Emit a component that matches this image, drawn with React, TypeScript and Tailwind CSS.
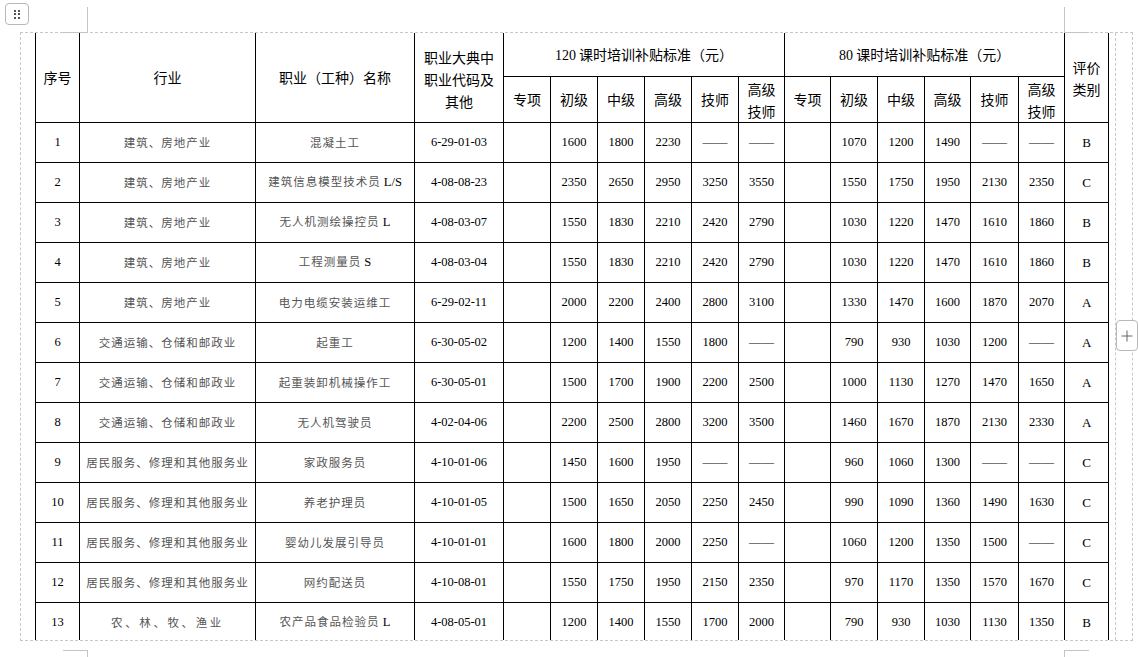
import React from "react";

const CJK = "font-['Noto_Sans_CJK_SC','Noto_Sans',sans-serif]";
const SERIF = "font-['Liberation_Serif','Noto_Sans_CJK_SC',serif]";

type Row = {
  no: string;
  ind: string;
  indWide?: boolean;
  name: string;
  suffix?: string;
  code: string;
  a: string[];
  b: string[];
  g: string;
};

const D = "——";

const rows: Row[] = [
  { no: "1", ind: "建筑、房地产业", name: "混凝土工", code: "6-29-01-03", a: ["1600", "1800", "2230", D, D], b: ["1070", "1200", "1490", D, D], g: "B" },
  { no: "2", ind: "建筑、房地产业", name: "建筑信息模型技术员", suffix: "L/S", code: "4-08-08-23", a: ["2350", "2650", "2950", "3250", "3550"], b: ["1550", "1750", "1950", "2130", "2350"], g: "C" },
  { no: "3", ind: "建筑、房地产业", name: "无人机测绘操控员", suffix: "L", code: "4-08-03-07", a: ["1550", "1830", "2210", "2420", "2790"], b: ["1030", "1220", "1470", "1610", "1860"], g: "B" },
  { no: "4", ind: "建筑、房地产业", name: "工程测量员", suffix: "S", code: "4-08-03-04", a: ["1550", "1830", "2210", "2420", "2790"], b: ["1030", "1220", "1470", "1610", "1860"], g: "B" },
  { no: "5", ind: "建筑、房地产业", name: "电力电缆安装运维工", code: "6-29-02-11", a: ["2000", "2200", "2400", "2800", "3100"], b: ["1330", "1470", "1600", "1870", "2070"], g: "A" },
  { no: "6", ind: "交通运输、仓储和邮政业", name: "起重工", code: "6-30-05-02", a: ["1200", "1400", "1550", "1800", D], b: ["790", "930", "1030", "1200", D], g: "A" },
  { no: "7", ind: "交通运输、仓储和邮政业", name: "起重装卸机械操作工", code: "6-30-05-01", a: ["1500", "1700", "1900", "2200", "2500"], b: ["1000", "1130", "1270", "1470", "1650"], g: "A" },
  { no: "8", ind: "交通运输、仓储和邮政业", name: "无人机驾驶员", code: "4-02-04-06", a: ["2200", "2500", "2800", "3200", "3500"], b: ["1460", "1670", "1870", "2130", "2330"], g: "A" },
  { no: "9", ind: "居民服务、修理和其他服务业", name: "家政服务员", code: "4-10-01-06", a: ["1450", "1600", "1950", D, D], b: ["960", "1060", "1300", D, D], g: "C" },
  { no: "10", ind: "居民服务、修理和其他服务业", name: "养老护理员", code: "4-10-01-05", a: ["1500", "1650", "2050", "2250", "2450"], b: ["990", "1090", "1360", "1490", "1630"], g: "C" },
  { no: "11", ind: "居民服务、修理和其他服务业", name: "婴幼儿发展引导员", code: "4-10-01-01", a: ["1600", "1800", "2000", "2250", D], b: ["1060", "1200", "1350", "1500", D], g: "C" },
  { no: "12", ind: "居民服务、修理和其他服务业", name: "网约配送员", code: "4-10-08-01", a: ["1550", "1750", "1950", "2150", "2350"], b: ["970", "1170", "1350", "1570", "1670"], g: "C" },
  { no: "13", ind: "农、林、牧、渔业", indWide: true, name: "农产品食品检验员", suffix: "L", code: "4-08-05-01", a: ["1200", "1400", "1550", "1700", "2000"], b: ["790", "930", "1030", "1130", "1350"], g: "B" },
];

const cell = "border border-black p-0 text-center align-middle";
const topCell = "border border-black border-t-[#444] border-t-dotted p-0 text-center align-middle";
const levels = ["专项", "初级", "中级", "高级", "技师"];

function Num({ v }: { v: string }) {
  return <td className={`${cell} ${SERIF} text-[12.5px] text-black`}>{v}</td>;
}

function LevelHeaders() {
  return (
    <>
      {levels.map((l) => (
        <th key={l} className={`${cell} font-normal`}>
          {l}
        </th>
      ))}
      <th className={`${cell} font-normal leading-[22px]`}>
        高级
        <br />
        技师
      </th>
    </>
  );
}

export default function App() {
  const widths = [44, 176, 159, 89, 47, 47, 47, 47, 47, 46, 46, 47, 47, 46, 48, 46, 44];
  return (
    <div className="relative w-[1138px] h-[657px] overflow-hidden bg-white">
      {/* drag handle */}
      <div className="absolute left-[5px] top-[3px] w-[24px] h-[22px] rounded-[4px] border border-[#b8b8b8] bg-white flex items-center justify-center">
        <div className="grid grid-cols-2 gap-x-[2px] gap-y-[1.5px]">
          {[0, 1, 2, 3, 4, 5].map((i) => (
            <span key={i} className="block w-[2px] h-[2px] bg-[#555]" />
          ))}
        </div>
      </div>

      {/* page corner marks */}
      <div className="absolute left-[87px] top-[7px] w-px h-[26px] bg-[#c4c4c4]" />
      <div className="absolute left-[63px] top-[32px] w-[25px] h-px bg-[#c4c4c4]" />
      <div className="absolute left-[1064px] top-[7px] w-px h-[26px] bg-[#c4c4c4]" />
      <div className="absolute left-[1064px] top-[32px] w-[25px] h-px bg-[#c4c4c4]" />
      <div className="absolute left-[63px] top-[650px] w-[25px] h-px bg-[#c4c4c4]" />
      <div className="absolute left-[87px] top-[650px] w-px h-[10px] bg-[#c4c4c4]" />
      <div className="absolute left-[1064px] top-[650px] w-[25px] h-px bg-[#c4c4c4]" />
      <div className="absolute left-[1064px] top-[650px] w-px h-[10px] bg-[#c4c4c4]" />

      <div className="h-[32px]" />
      <div className="ml-[20px] w-[1113px] h-[609px] border border-dashed border-[#c8c8c8] flex overflow-hidden">
        <div className="w-[14px] shrink-0" />
        <div className="shrink-0 -mt-px">
          <table className={`table-fixed border-collapse w-[1073px] ${CJK} text-[14px] text-black`}>
            <colgroup>
              {widths.map((w, i) => (
                <col key={i} style={{ width: w }} />
              ))}
            </colgroup>
            <thead>
              <tr className="h-[44px]">
                <th rowSpan={2} className={`${topCell} font-normal`}>序号</th>
                <th rowSpan={2} className={`${topCell} font-normal`}>行业</th>
                <th rowSpan={2} className={`${topCell} font-normal`}>职业（工种）名称</th>
                <th rowSpan={2} className={`${topCell} font-normal leading-[22px] pt-[2px]`}>
                  职业大典中
                  <br />
                  职业代码及
                  <br />
                  其他
                </th>
                <th colSpan={6} className={`${topCell} font-normal`}>
                  <span className={`${SERIF} text-[14px]`}>120</span> 课时培训补贴标准（元）
                </th>
                <th colSpan={6} className={`${topCell} font-normal`}>
                  <span className={`${SERIF} text-[14px]`}>80</span> 课时培训补贴标准（元）
                </th>
                <th rowSpan={2} className={`${topCell} font-normal leading-[22px]`}>
                  评价
                  <br />
                  类别
                </th>
              </tr>
              <tr className="h-[46px]">
                <LevelHeaders />
                <LevelHeaders />
              </tr>
            </thead>
            <tbody>
              {rows.map((r) => (
                <tr key={r.no} className="h-[40px]">
                  <td className={`${cell} ${SERIF} text-[12.5px]`}>{r.no}</td>
                  <td
                    className={`${cell} text-[11.5px] text-[#555] ${
                      r.indWide ? "tracking-[2.6px]" : "tracking-[1px]"
                    }`}
                  >
                    {r.ind}
                  </td>
                  <td className={`${cell} text-[11.5px] text-[#555] tracking-[1px]`}>
                    {r.name}
                    {r.suffix && (
                      <span className={`${SERIF} text-[12.5px] text-black tracking-normal`}>{" " + r.suffix}</span>
                    )}
                  </td>
                  <Num v={r.code} />
                  <td className={cell} />
                  {r.a.map((v, i) => (
                    <Num key={"a" + i} v={v} />
                  ))}
                  <td className={cell} />
                  {r.b.map((v, i) => (
                    <Num key={"b" + i} v={v} />
                  ))}
                  <td className={`${cell} ${SERIF} text-[13px]`}>{r.g}</td>
                </tr>
              ))}
            </tbody>
          </table>
        </div>
        <div className="w-[6px] shrink-0" />
        <div className="flex-1 border-l border-dashed border-[#c8c8c8]" />
      </div>

      {/* add column button */}
      <div className="absolute left-[1116px] top-[320px] w-[22px] h-[31px] rounded-[4px] border border-[#b8b8b8] bg-white flex items-center justify-center">
        <svg width="12" height="12" viewBox="0 0 12 12">
          <path d="M6 0.5V11.5M0.5 6H11.5" stroke="#666" strokeWidth="1" />
        </svg>
      </div>
    </div>
  );
}
